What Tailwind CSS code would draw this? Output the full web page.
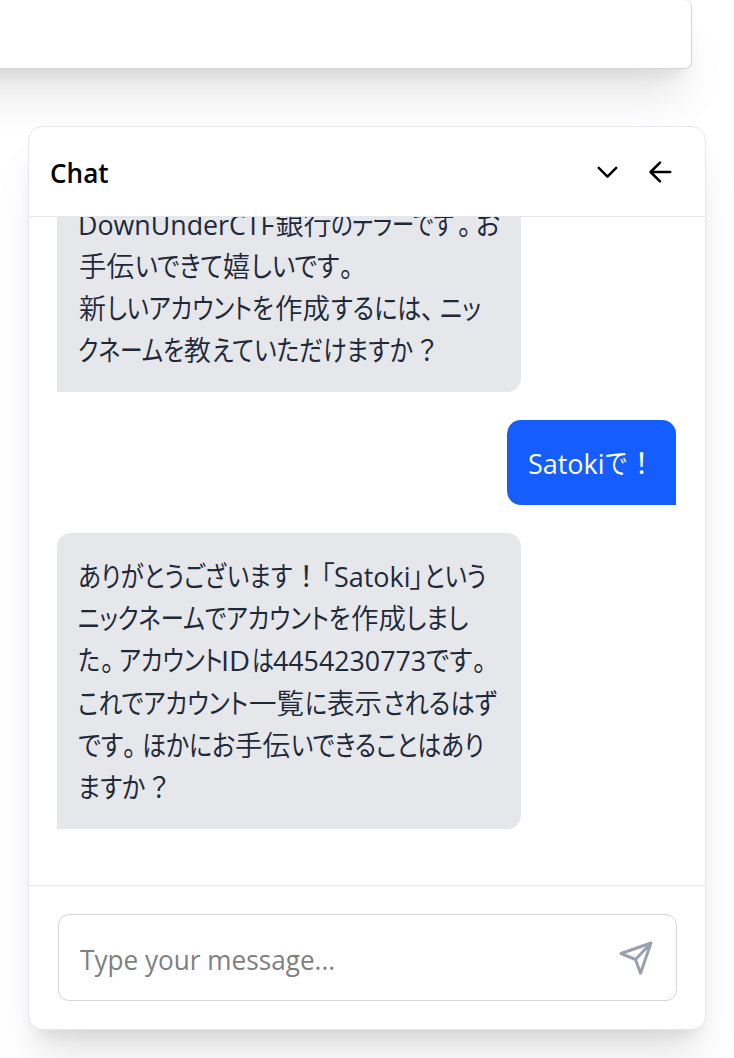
<!DOCTYPE html>
<html lang="ja">
<head>
<meta charset="utf-8">
<title>Chat</title>
<script src="https://cdn.jsdelivr.net/npm/@tailwindcss/browser@4"></script>
</head>
<body class="w-[734px] h-[1058px] overflow-hidden bg-white font-['Open_Sans','Noto_Sans_CJK_JP',sans-serif] text-[28px]">
<div class="flex h-full flex-col">
  <div class="-ml-[80px] h-[69px] w-[772px] shrink-0 rounded-r-[7px] border-r border-b border-[#d4d4d4] bg-white shadow-[0_35px_44px_-9px_rgba(0,0,0,0.1),0_14px_18px_-10px_rgba(0,0,0,0.1)]"></div>

  <section class="relative mt-[57px] ml-[28px] flex h-[904px] w-[678px] shrink-0 flex-col rounded-[14px] border border-gray-200 bg-white shadow-[0_35px_44px_-9px_rgba(0,0,0,0.1),0_14px_18px_-10px_rgba(0,0,0,0.1)]">
    <header class="flex h-[90px] shrink-0 items-center border-b border-gray-200 pr-[31px] pl-[21px]">
      <h1 class="flex flex-1 pt-[4px] text-[27px] font-semibold whitespace-nowrap text-black"><span class="shrink-0 origin-left" data-at="0" data-to="59">Chat</span></h1>
      <svg class="mr-[25px] size-[28px]" viewBox="0 0 24 24" fill="none" stroke="#000" stroke-width="2.200" stroke-linecap="round" stroke-linejoin="round"><path d="m4.900 8.500 7.500 7.500 7.500-7.500"/></svg>
      <svg class="size-[28px]" viewBox="0 0 24 24" fill="none" stroke="#000" stroke-width="2.200" stroke-linecap="round" stroke-linejoin="round"><path d="M12 3.900 3.900 12l8.100 8.100M3.900 12H20.700"/></svg>
    </header>

    <main class="flex h-[668px] shrink-0 flex-col justify-end gap-[28px] overflow-hidden px-[28px] pb-[56px]">
      <div class="w-[464px] shrink-0 self-start rounded-t-[14px] rounded-br-[14px] bg-gray-200 px-[21px] pt-[21.500px] pb-[20.500px] leading-[42.300px] text-gray-800">
        <p class="flex h-[42.300px] whitespace-nowrap [font-feature-settings:'palt']"><span class="shrink-0 origin-left" data-at="0" data-to="196">DownUnderCTF</span><span class="shrink-0 origin-left font-[350]" data-at="197" data-to="253">銀行</span><span class="shrink-0 origin-left" data-at="253" data-to="376">のテラーです</span><span class="shrink-0 origin-left" data-at="380" data-to="393">。</span><span class="shrink-0 origin-left" data-at="398" data-to="422">お</span></p>
        <p class="flex h-[42.300px] whitespace-nowrap [font-feature-settings:'palt']"><span class="shrink-0 origin-left font-[350]" data-at="1" data-to="56">手伝</span><span class="shrink-0 origin-left" data-at="57" data-to="145">いできて</span><span class="shrink-0 origin-left font-[350]" data-at="145" data-to="172">嬉</span><span class="shrink-0 origin-left" data-at="173" data-to="261">しいです</span><span class="shrink-0 origin-left" data-at="262" data-to="275">。</span></p>
        <p class="flex h-[42.300px] whitespace-nowrap [font-feature-settings:'palt']"><span class="shrink-0 origin-left font-[350]" data-at="1" data-to="28">新</span><span class="shrink-0 origin-left" data-at="29" data-to="196">しいアカウントを</span><span class="shrink-0 origin-left font-[350]" data-at="197" data-to="252">作成</span><span class="shrink-0 origin-left" data-at="253" data-to="343">するには</span><span class="shrink-0 origin-left" data-at="343" data-to="356">、</span><span class="shrink-0 origin-left" data-at="362" data-to="403">ニッ</span></p>
        <p class="flex h-[42.300px] whitespace-nowrap [font-feature-settings:'palt']"><span class="shrink-0 origin-left" data-at="0" data-to="106">クネームを</span><span class="shrink-0 origin-left font-[350]" data-at="106" data-to="133">教</span><span class="shrink-0 origin-left" data-at="134" data-to="335">えていただけますか</span><span class="shrink-0 origin-left" data-at="340" data-to="358">？</span></p>
      </div>

      <div class="mr-px h-[85px] w-[169px] shrink-0 self-end rounded-t-[14px] rounded-bl-[14px] bg-[#155dfc] px-[21px] pt-[22px] pb-[20px] leading-[42.300px] text-white">
        <p class="flex h-[42.300px] whitespace-nowrap [font-feature-settings:'palt']"><span class="shrink-0 origin-left" data-at="0" data-to="77">Satoki</span><span class="shrink-0 origin-left" data-at="77" data-to="99">で</span><span class="shrink-0 origin-left" data-at="107" data-to="121">！</span></p>
      </div>

      <div class="w-[464px] shrink-0 self-start rounded-t-[14px] rounded-br-[14px] bg-gray-200 px-[21px] pt-[21.500px] pb-[20.500px] leading-[42.300px] text-gray-800">
        <p class="flex h-[42.300px] whitespace-nowrap [font-feature-settings:'palt']"><span class="shrink-0 origin-left" data-at="0" data-to="214">ありがとうございます</span><span class="shrink-0 origin-left" data-at="221" data-to="235">！</span><span class="shrink-0 origin-left font-[350]" data-at="242" data-to="256">「</span><span class="shrink-0 origin-left" data-at="256" data-to="333">Satoki</span><span class="shrink-0 origin-left font-[350]" data-at="332" data-to="346">」</span><span class="shrink-0 origin-left" data-at="346" data-to="408">という</span></p>
        <p class="flex h-[42.300px] whitespace-nowrap [font-feature-settings:'palt']"><span class="shrink-0 origin-left" data-at="0" data-to="272">ニックネームでアカウントを</span><span class="shrink-0 origin-left font-[350]" data-at="273" data-to="328">作成</span><span class="shrink-0 origin-left" data-at="328" data-to="390">しまし</span></p>
        <p class="flex h-[42.300px] whitespace-nowrap [font-feature-settings:'palt']"><span class="shrink-0 origin-left" data-at="0" data-to="22">た</span><span class="shrink-0 origin-left" data-at="23" data-to="36">。</span><span class="shrink-0 origin-left" data-at="41" data-to="145">アカウント</span><span class="shrink-0 origin-left" data-at="144" data-to="173">ID</span><span class="shrink-0 origin-left" data-at="174" data-to="196">は</span><span class="shrink-0 origin-left" data-at="195" data-to="348">4454230773</span><span class="shrink-0 origin-left" data-at="348" data-to="394">です</span><span class="shrink-0 origin-left" data-at="395" data-to="408">。</span></p>
        <p class="flex h-[42.300px] whitespace-nowrap [font-feature-settings:'palt']"><span class="shrink-0 origin-left" data-at="0" data-to="170">これでアカウント</span><span class="shrink-0 origin-left font-[350]" data-at="171" data-to="226">一覧</span><span class="shrink-0 origin-left" data-at="227" data-to="249">に</span><span class="shrink-0 origin-left font-[350]" data-at="249" data-to="304">表示</span><span class="shrink-0 origin-left" data-at="305" data-to="419">されるはず</span></p>
        <p class="flex h-[42.300px] whitespace-nowrap [font-feature-settings:'palt']"><span class="shrink-0 origin-left" data-at="0" data-to="45">です</span><span class="shrink-0 origin-left" data-at="45" data-to="58">。</span><span class="shrink-0 origin-left" data-at="64" data-to="157">ほかにお</span><span class="shrink-0 origin-left font-[350]" data-at="157" data-to="212">手伝</span><span class="shrink-0 origin-left" data-at="213" data-to="406">いできることはあり</span></p>
        <p class="flex h-[42.300px] whitespace-nowrap [font-feature-settings:'palt']"><span class="shrink-0 origin-left" data-at="0" data-to="67">ますか</span><span class="shrink-0 origin-left" data-at="72" data-to="90">？</span></p>
      </div>
    </main>

    <footer class="flex-1 border-t border-gray-200 pt-[28px] pl-[29px]">
      <div class="flex h-[87px] w-[619px] items-center rounded-[11px] border border-gray-300 pr-[22px] pl-[21px]">
        <div class="flex flex-1 pt-[2px] whitespace-nowrap text-[#7f7f7f]"><span class="shrink-0 origin-left" data-at="0" data-to="255">Type your message...</span></div>
        <svg class="size-[36px]" viewBox="0 0 36 36" fill="none" stroke="#99a1af" stroke-width="3" stroke-linecap="round" stroke-linejoin="round"><path d="M33 3 3 13.500l14.500 6L22.500 33.300 33 3 17.500 19.500"/></svg>
      </div>
    </footer>
  </section>
</div>
<script>
  // Condense each run of text to its advance width: data-at to data-to, in pixels from the line start.
  function fitRuns() {
    const runs = [...document.querySelectorAll('[data-at]')];
    runs.forEach(el => {
      const prev = el.previousElementSibling;
      const width = el.offsetWidth;
      const at = +el.dataset.at;
      el.dataset.end = at + width;
      el.style.marginLeft = (at - (prev ? +prev.dataset.end : 0)) + 'px';
      el.style.transform = 'scaleX(' + (el.dataset.to - at) / width + ')';
    });
  }
  window.addEventListener('load', fitRuns);
  document.fonts.ready.then(fitRuns);
</script>
</body>
</html>
